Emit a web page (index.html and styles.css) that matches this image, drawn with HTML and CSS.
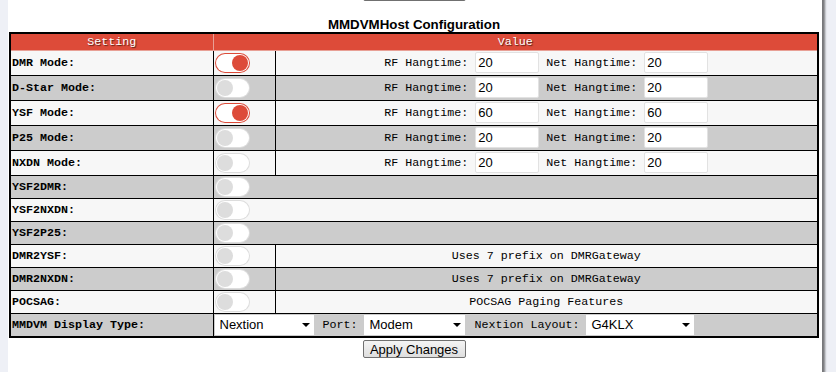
FILE: index.html
```html
<!DOCTYPE html>
<html lang="en">
<head>
    <meta charset="UTF-8">
    <meta name="viewport" content="width=device-width, initial-scale=1.0">
    <title>Pi-Star - Configuration</title>
    <link rel="stylesheet" href="styles.css">
</head>
<body>
<div class="container">
    <div class="submit-row prev"><input type="button" class="apply" value="Apply Changes"></div>

    <h2>MMDVMHost Configuration</h2>
    <table class="config">
        <colgroup>
            <col class="col-setting">
            <col class="col-switch">
            <col>
        </colgroup>
        <tr>
            <th>Setting</th>
            <th colspan="2">Value</th>
        </tr>
        <tr class="hang">
            <td class="label">DMR Mode:</td>
            <td><input type="checkbox" class="toggle" id="toggle-dmr" checked><label for="toggle-dmr"></label></td>
            <td class="value">RF Hangtime: <input type="text" class="num" value="20"> Net Hangtime: <input type="text" class="num" value="20"></td>
        </tr>
        <tr class="hang">
            <td class="label">D-Star Mode:</td>
            <td><input type="checkbox" class="toggle" id="toggle-dstar"><label for="toggle-dstar"></label></td>
            <td class="value">RF Hangtime: <input type="text" class="num" value="20"> Net Hangtime: <input type="text" class="num" value="20"></td>
        </tr>
        <tr class="hang">
            <td class="label">YSF Mode:</td>
            <td><input type="checkbox" class="toggle" id="toggle-ysf" checked><label for="toggle-ysf"></label></td>
            <td class="value">RF Hangtime: <input type="text" class="num" value="60"> Net Hangtime: <input type="text" class="num" value="60"></td>
        </tr>
        <tr class="hang">
            <td class="label">P25 Mode:</td>
            <td><input type="checkbox" class="toggle" id="toggle-p25"><label for="toggle-p25"></label></td>
            <td class="value">RF Hangtime: <input type="text" class="num" value="20"> Net Hangtime: <input type="text" class="num" value="20"></td>
        </tr>
        <tr class="hang">
            <td class="label">NXDN Mode:</td>
            <td><input type="checkbox" class="toggle" id="toggle-nxdn"><label for="toggle-nxdn"></label></td>
            <td class="value">RF Hangtime: <input type="text" class="num" value="20"> Net Hangtime: <input type="text" class="num" value="20"></td>
        </tr>
        <tr>
            <td class="label">YSF2DMR:</td>
            <td colspan="2"><input type="checkbox" class="toggle" id="toggle-ysf2dmr"><label for="toggle-ysf2dmr"></label></td>
        </tr>
        <tr>
            <td class="label">YSF2NXDN:</td>
            <td colspan="2"><input type="checkbox" class="toggle" id="toggle-ysf2nxdn"><label for="toggle-ysf2nxdn"></label></td>
        </tr>
        <tr>
            <td class="label">YSF2P25:</td>
            <td colspan="2"><input type="checkbox" class="toggle" id="toggle-ysf2p25"><label for="toggle-ysf2p25"></label></td>
        </tr>
        <tr>
            <td class="label">DMR2YSF:</td>
            <td><input type="checkbox" class="toggle" id="toggle-dmr2ysf"><label for="toggle-dmr2ysf"></label></td>
            <td class="value">Uses 7 prefix on DMRGateway</td>
        </tr>
        <tr>
            <td class="label">DMR2NXDN:</td>
            <td><input type="checkbox" class="toggle" id="toggle-dmr2nxdn"><label for="toggle-dmr2nxdn"></label></td>
            <td class="value">Uses 7 prefix on DMRGateway</td>
        </tr>
        <tr>
            <td class="label">POCSAG:</td>
            <td><input type="checkbox" class="toggle" id="toggle-pocsag"><label for="toggle-pocsag"></label></td>
            <td class="value">POCSAG Paging Features</td>
        </tr>
        <tr>
            <td class="label">MMDVM Display Type:</td>
            <td colspan="2" class="display">
                <span class="select display-type"><select><option>Nextion</option><option>OLED</option><option>HD44780</option><option>None</option></select></span>
                <span class="field-label">Port:</span> <span class="select port"><select><option>Modem</option><option>/dev/ttyAMA0</option><option>/dev/ttyUSB0</option></select></span>
                <span class="field-label">Nextion Layout:</span> <span class="select layout"><select><option>G4KLX</option><option>ON7LDS L2</option><option>ON7LDS L3</option></select></span>
            </td>
        </tr>
    </table>
    <div class="submit-row"><input type="button" class="apply" value="Apply Changes"></div>
</div>
</body>
</html>
```

FILE: styles.css
```css
body {
    margin: 0;
    background-color: #eef0f6;
    font-family: "Liberation Sans", Arial, sans-serif;
}
.container {
    margin-left: 8px;
    width: 810px;
    padding: 0 3px 0 1px;
    min-height: 400px;
    background-color: #fff;
    box-shadow: 3px 0 2px rgba(0, 0, 0, 0.5);
}
h2 {
    margin: 16px 0 0;
    font-size: 13.3px;
    line-height: 15px;
    font-weight: bold;
    text-align: center;
    color: #000;
}
.submit-row {
    text-align: center;
    padding-top: 2px;
}
.submit-row.prev {
    margin-top: -20px;
}
.apply {
    width: 103px;
    height: 18px;
    padding: 0;
    font-family: "Liberation Sans", Arial, sans-serif;
    font-size: 13px;
    color: #000;
    border: 1px solid #707070;
    border-radius: 2px;
    background: linear-gradient(#f4f4f4, #dedede);
    cursor: pointer;
}
.config {
    width: 810px;
    border-collapse: collapse;
    border: 2px solid #000;
    font-family: "Liberation Mono", "Courier New", monospace;
    font-size: 11.67px;
    color: #000;
}
.col-setting {
    width: 203px;
}
.col-switch {
    width: 62px;
}
.config th {
    height: 16px;
    padding: 0;
    background-color: #dd4b39;
    color: #fff;
    font-weight: normal;
    text-shadow: 1px 1px 1px rgba(0, 0, 0, 0.6);
    border: 1px solid #e8a096;
    border-top: 2px solid #000;
}
.config th:first-child {
    border-left: 2px solid #000;
}
.config th:last-child {
    border-right: 2px solid #000;
}
.config td {
    height: 22px;
    padding: 0 1px;
    border: 1px solid #000;
    white-space: nowrap;
}
.config tr.hang td {
    height: 24px;
}
.config tr:nth-child(even) {
    background-color: #f7f7f7;
}
.config tr:nth-child(odd) {
    background-color: #cccccc;
}
.config td.label {
    font-weight: bold;
    text-align: left;
}
.config td.value {
    text-align: center;
}
.config td.display {
    text-align: left;
}
.field-label {
    margin-left: 2px;
}
.num {
    box-sizing: border-box;
    width: 64px;
    height: 21px;
    margin: 0;
    padding: 0 2px;
    vertical-align: middle;
    font-family: "Liberation Sans", Arial, sans-serif;
    font-size: 13px;
    color: #000;
    background: #fff;
    border: 1px solid #e2e2e2;
    border-radius: 2px;
}

/* round flat switches */
.toggle {
    position: absolute;
    margin-left: -9999px;
    visibility: hidden;
}
.toggle + label {
    display: block;
    position: relative;
    width: 33px;
    height: 18px;
    padding: 1px;
    background-color: #dddddd;
    border-radius: 10px;
    cursor: pointer;
}
.toggle + label:before,
.toggle + label:after {
    display: block;
    position: absolute;
    content: "";
}
.toggle + label:before {
    top: 1px;
    left: 1px;
    bottom: 1px;
    right: 1px;
    background-color: #fff;
    border-radius: 10px;
}
.toggle + label:after {
    top: 2px;
    left: 2px;
    bottom: 2px;
    width: 16px;
    background-color: #dddddd;
    border-radius: 50%;
}
.toggle:checked + label {
    background-color: #dd4b39;
}
.toggle:checked + label:after {
    margin-left: 15px;
    background-color: #dd4b39;
}

/* dropdowns */
.select {
    position: relative;
    display: inline-block;
    vertical-align: middle;
}
.select select {
    appearance: none;
    -webkit-appearance: none;
    box-sizing: border-box;
    width: 100%;
    height: 20px;
    margin: 0;
    padding: 0 0 0 5px;
    font-family: "Liberation Sans", Arial, sans-serif;
    font-size: 13px;
    color: #000;
    background: #fff;
    border: none;
    border-radius: 0;
}
.select:after {
    content: "";
    position: absolute;
    right: 4px;
    top: 8px;
    border-left: 4px solid transparent;
    border-right: 4px solid transparent;
    border-top: 4px solid #000;
    pointer-events: none;
}
.display-type {
    width: 99px;
}
.port {
    width: 101px;
}
.layout {
    width: 108px;
}
```
